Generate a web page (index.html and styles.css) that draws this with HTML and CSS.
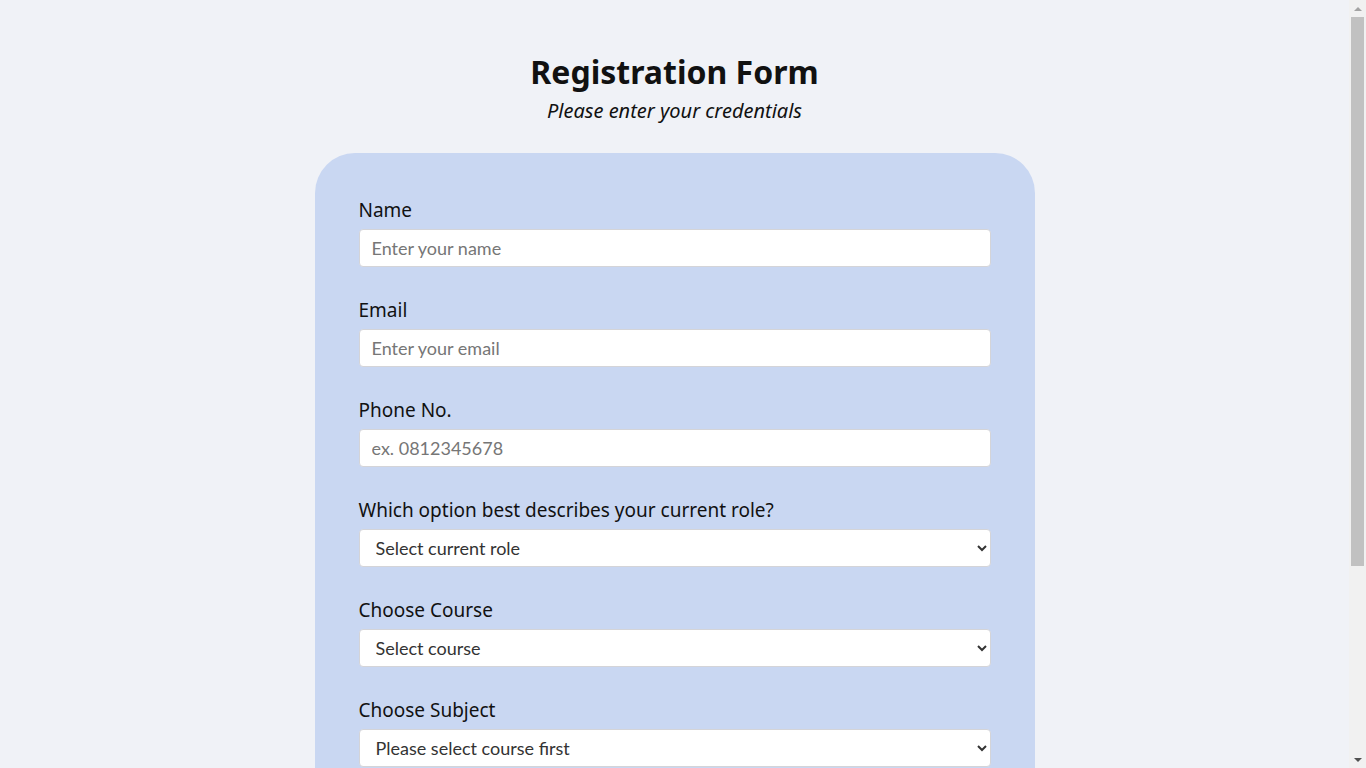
FILE: index.html
```html
<!DOCTYPE html>
<html lang="en">
<head>
<meta charset="utf-8">
<title>Registration Form</title>
<link rel="stylesheet" href="styles.css">
</head>
<body>
<div class="page">
  <header class="page-head">
    <h1 class="title">Registration Form</h1>
    <p class="subtitle">Please enter your credentials</p>
  </header>
  <main class="card">
    <form class="form">
      <div class="field">
        <label class="label" for="name">Name</label>
        <input class="control" id="name" type="text" placeholder="Enter your name">
      </div>
      <div class="field">
        <label class="label" for="email">Email</label>
        <input class="control" id="email" type="email" placeholder="Enter your email">
      </div>
      <div class="field">
        <label class="label" for="phone">Phone No.</label>
        <input class="control" id="phone" type="tel" placeholder="ex. 0812345678">
      </div>
      <div class="field">
        <label class="label" for="role">Which option best describes your current role?</label>
        <select class="control select" id="role">
          <option>Select current role</option>
        </select>
      </div>
      <div class="field">
        <label class="label" for="course">Choose Course</label>
        <select class="control select" id="course">
          <option>Select course</option>
        </select>
      </div>
      <div class="field">
        <label class="label" for="subject">Choose Subject</label>
        <select class="control select" id="subject">
          <option>Please select course first</option>
        </select>
      </div>
      <div class="actions">
        <button class="submit" type="submit">Submit</button>
      </div>
    </form>
  </main>
</div>
<div class="scrollbar" aria-hidden="true">
  <span class="sb-arrow sb-up"></span>
  <span class="sb-track"><span class="sb-thumb"></span></span>
  <span class="sb-arrow sb-down"></span>
</div>
</body>
</html>
```
FILE: styles.css
```css
html, body {
  margin: 0;
  padding: 0;
}
body {
  background: #f0f2f7;
  font-family: "Noto Sans", "DejaVu Sans", sans-serif;
  color: #111;
}
.page {
  padding: 48px 17px 112px 0;
}
.page-head {
  text-align: center;
}
.title {
  margin: 0;
  font-size: 32px;
  font-weight: 700;
  line-height: 48px;
  color: #111;
}
.subtitle {
  margin: 0;
  font-size: 20px;
  font-style: italic;
  line-height: 30px;
}
.card {
  width: 632px;
  margin: 27px auto 0;
  background: #c9d7f2;
  border-radius: 40px;
  padding: 43px 44px 48px;
}
.form {
  display: flex;
  flex-direction: column;
  gap: 29px;
}
.field {
  display: flex;
  flex-direction: column;
  gap: 5px;
}
.label {
  font-size: 19px;
  line-height: 28px;
  color: #111;
}
.control {
  box-sizing: border-box;
  width: 100%;
  height: 38px;
  border: 1px solid #d4d4d8;
  border-radius: 4px;
  background: #fff;
  font-family: Lato, "Noto Sans", sans-serif;
  font-size: 18px;
  padding: 0 12px;
  color: #333;
}
.control::placeholder {
  color: #767676;
}
.actions {
  display: flex;
  justify-content: center;
  padding-top: 24px;
}
.submit {
  font-family: "Noto Sans", sans-serif;
  font-size: 18px;
  height: 46px;
  padding: 0 40px;
  border: none;
  border-radius: 6px;
  background: #3b5bdb;
  color: #fff;
}

/* classic browser scrollbar, drawn over the right edge */
.scrollbar {
  position: fixed;
  top: 0;
  right: 0;
  width: 17px;
  height: 100vh;
  background: #f1f1f1;
  display: flex;
  flex-direction: column;
}
.sb-arrow {
  flex: 0 0 17px;
  display: flex;
  align-items: center;
  justify-content: center;
}
.sb-arrow::before {
  content: "";
  width: 0;
  height: 0;
  border-left: 4px solid transparent;
  border-right: 4px solid transparent;
}
.sb-up::before {
  border-bottom: 4px solid #a3a3a3;
}
.sb-down::before {
  border-top: 4px solid #505050;
}
.sb-track {
  flex: 1;
  display: flex;
  flex-direction: column;
  padding: 0 2px;
}
.sb-thumb {
  height: 549px;
  background: #c1c1c1;
}
```
